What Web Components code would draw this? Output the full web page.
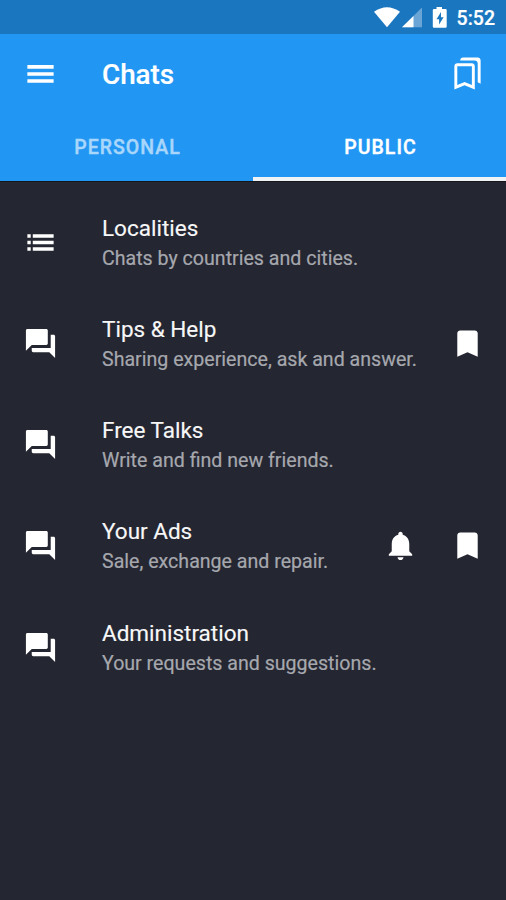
<!DOCTYPE html>
<html lang="en"><head><meta charset="utf-8"><title>Chats</title>
<style>html,body{margin:0;height:100%;background:#242631}</style></head><body>
<chat-app></chat-app>
<script>
const icons = {
  menu: '<path d="M3 18.400h18v-2.500H3zM3 13.600h18v-2.500H3zM3 8.700h18V6.200H3z"/>',
  list: '<path d="M3 13.200h2.300v-2.400H3zm0 4.400h2.300v-2.400H3zM3 8.800h2.300V6.400H3zM6.700 13.200H21v-2.400H6.700zm0 4.400H21v-2.400H6.700zM6.700 6.400v2.400H21V6.400z"/>',
  forum: '<path d="M21 6h-2v9H6v2c0 .55.45 1 1 1h11l4 4V7c0-.55-.45-1-1-1zm-4 6V3c0-.55-.45-1-1-1H3c-.55 0-1 .45-1 1v14l4-4h10c.55 0 1-.45 1-1z"/>',
  bookmark: '<path d="M17 3H7c-1.100 0-2 .9-2 2v16l7-3 7 3V5c0-1.100-.9-2-2-2z"/>',
  bookmarks: '<path d="M15 7v12.970l-4.210-1.810-.79-.34-.79.34L5 19.970V7h10m4-6H8.990C7.890 1 7 1.900 7 3h10c1.100 0 2 .9 2 2v13l2 1V3c0-1.100-.9-2-2-2zm-4 4H5c-1.100 0-2 .9-2 2v16l7-3 7 3V7c0-1.100-.9-2-2-2z"/>',
  bell: '<path d="M12 22c1.100 0 2-.9 2-2h-4c0 1.100.89 2 2 2zm6-6v-5c0-3.070-1.640-5.640-4.500-6.320V4c0-.83-.67-1.500-1.500-1.500s-1.500.67-1.500 1.500v.68C7.630 5.360 6 7.920 6 11v5l-2 2v1h16v-1l-2-2z"/>'
};
class Base extends HTMLElement {
  constructor(){ super(); this.attachShadow({mode:'open'}); }
  connectedCallback(){ this.shadowRoot.innerHTML = this.view(); }
}
customElements.define('ui-icon', class extends Base {
  view(){ return `<style>:host{display:block;width:35px;height:35px;flex:none}svg{display:block;width:100%;height:100%;fill:#fff}</style><svg viewBox="0 0 24 24">${icons[this.getAttribute('name')]}</svg>`; }
});
customElements.define('status-bar', class extends Base {
  view(){ return `<style>:host{display:flex;height:34px;box-sizing:border-box;padding-right:11px;justify-content:flex-end;align-items:center;background:#1b76c0;color:#fff;font:500 19.500px/34px Roboto,sans-serif}
    svg{display:block;fill:#fff}span{padding-top:3px;-webkit-text-stroke:.2px}</style>
    <svg width="83" height="34" viewBox="0 0 83 34"><path d="M0 11.800Q13 2.500 26 11.800L13 27.200z"/><path d="M48 7.500v19.700H28z" opacity=".35"/><path d="M39.500 15.900v11.300H28z"/><path fill-rule="evenodd" d="M60 9h2.500V6.900h5.500V9H71.500q1.200 0 1.200 1.200v16.300q0 1.200-1.200 1.200H60q-1.200 0-1.200-1.200V10.200Q58.800 9 60 9zM67 12l-4.500 7.300h2.600v5.200l4.500-7.300h-2.600z"/></svg><span>5:52</span>`; }
});
customElements.define('app-bar', class extends Base {
  view(){ return `<style>:host{display:flex;height:79px;align-items:center;padding:0 21px 0 22.500px;background:#2196f3;color:#fff}
    h1{flex:1;margin:0 0 0 44.500px;font:500 27.800px/36px Roboto,sans-serif;padding-top:2px;-webkit-text-stroke:.2px}</style>
    <ui-icon name="menu"></ui-icon><h1><slot></slot></h1><ui-icon name="bookmarks"></ui-icon>`; }
});
customElements.define('tab-item', class extends Base {
  view(){ return `<style>:host{flex:1;display:flex;justify-content:center;box-sizing:border-box;height:68px;border-bottom:4px solid transparent;padding-left:2px;font:500 19.500px/70px Roboto,sans-serif;letter-spacing:1px;color:#a9d6fb;-webkit-text-stroke:.4px}
    :host([active]){color:#fff;border-color:#f0f3f5}</style><slot></slot>`; }
});
customElements.define('tab-bar', class extends Base {
  view(){ return `<style>:host{display:flex;background:#2196f3;border-bottom:1px solid #14181d}</style><slot></slot>`; }
});
customElements.define('chat-row', class extends Base {
  view(){ const a=(this.getAttribute('actions')||'').split(' ').filter(Boolean);
    return `<style>:host{display:flex;align-items:center;height:101.250px;padding:0 21px 0 22.500px;color:#fff;font-family:Roboto,sans-serif}
    .text{flex:1;min-width:0;margin-left:44.500px;white-space:nowrap;padding-top:2px}
    .title{font-size:22.500px;line-height:30px;color:#f7f7f8;-webkit-text-stroke:.15px}
    .sub{font-size:19.600px;line-height:30px;padding-top:1px;color:#a6a8ae;-webkit-text-stroke:.2px}
    .actions{display:flex;gap:32.500px}</style>
    <ui-icon name="${this.getAttribute('icon')}"></ui-icon><div class="text"><div class="title"><slot></slot></div><div class="sub"><slot name="sub"></slot></div></div><div class="actions">${a.map(n=>`<ui-icon name="${n}"></ui-icon>`).join('')}</div>`; }
});
customElements.define('chat-app', class extends Base {
  view(){ return `<style>:host{display:flex;flex-direction:column;height:900px;overflow:hidden;background:#242631}
    main{padding-top:9.600px}</style>
    <status-bar></status-bar><app-bar>Chats</app-bar>
    <tab-bar><tab-item>PERSONAL</tab-item><tab-item active>PUBLIC</tab-item></tab-bar>
    <main>
    <chat-row icon="list">Localities<span slot="sub">Chats by countries and cities.</span></chat-row>
    <chat-row icon="forum" actions="bookmark">Tips &amp; Help<span slot="sub">Sharing experience, ask and answer.</span></chat-row>
    <chat-row icon="forum">Free Talks<span slot="sub">Write and find new friends.</span></chat-row>
    <chat-row icon="forum" actions="bell bookmark">Your Ads<span slot="sub">Sale, exchange and repair.</span></chat-row>
    <chat-row icon="forum">Administration<span slot="sub">Your requests and suggestions.</span></chat-row>
    </main>`; }
});
</script></body></html>
